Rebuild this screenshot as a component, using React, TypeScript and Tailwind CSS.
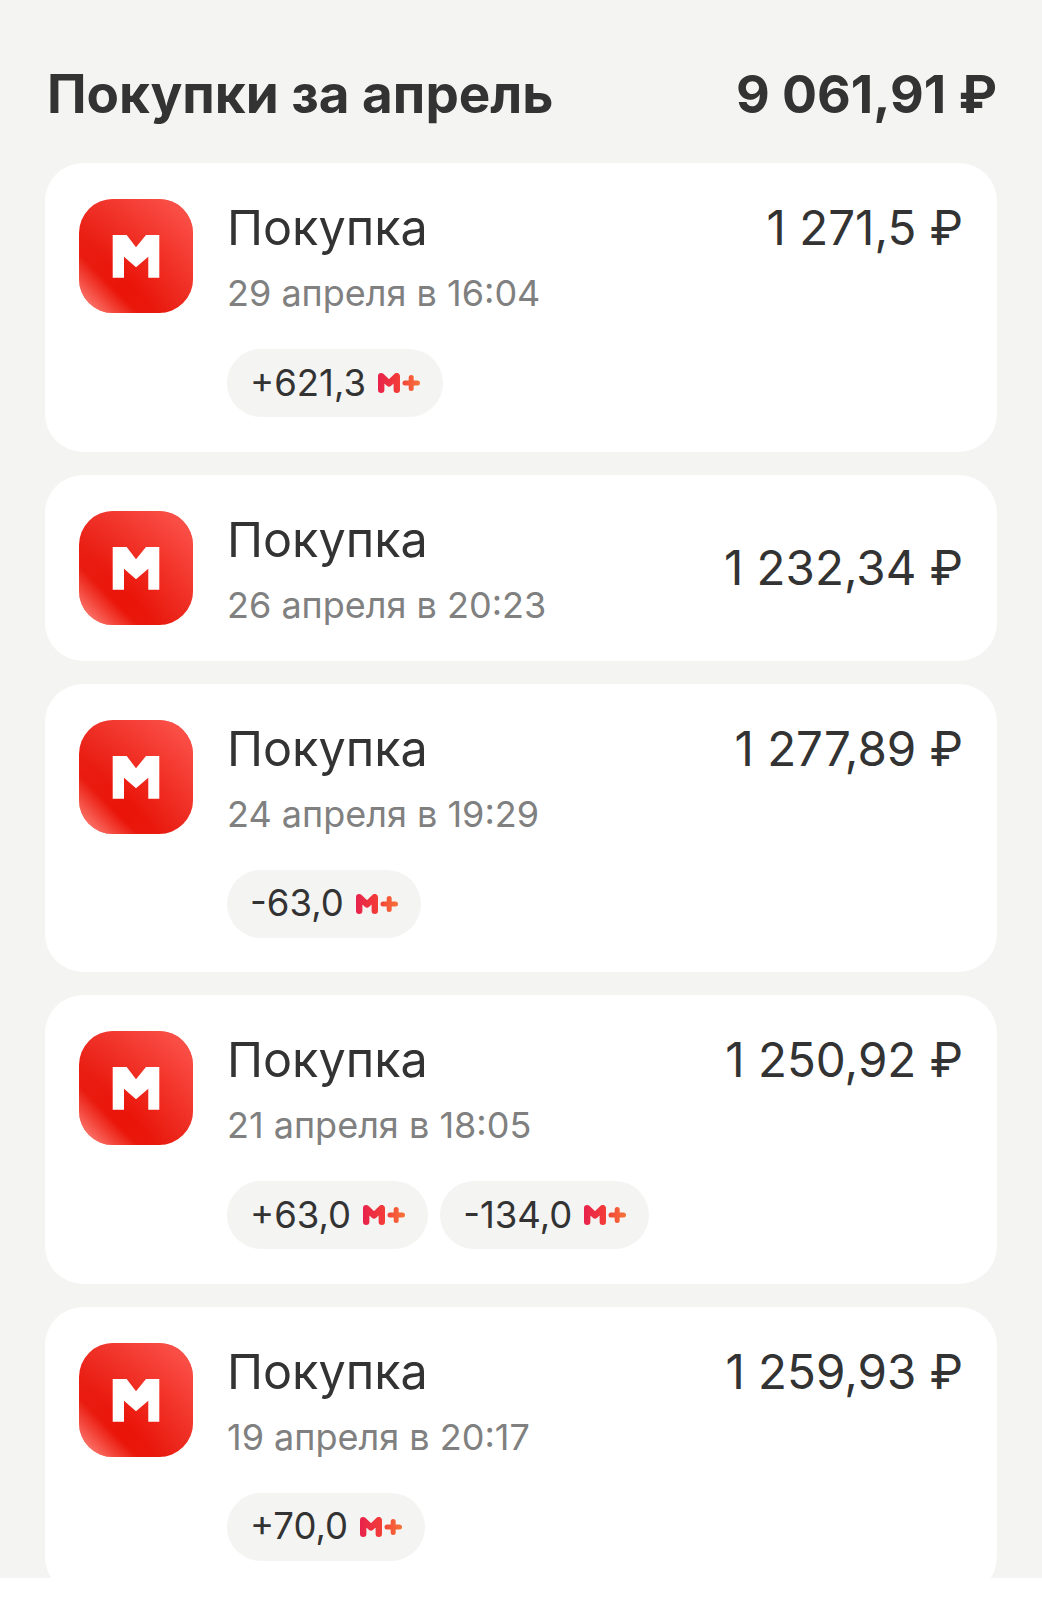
import { useId } from 'react'

type Purchase = {
  date: string
  amount: string
  bonuses: string[]
}

const PURCHASES: Purchase[] = [
  { date: '29 апреля в 16:04', amount: '1 271,5 ₽', bonuses: ['+621,3'] },
  { date: '26 апреля в 20:23', amount: '1 232,34 ₽', bonuses: [] },
  { date: '24 апреля в 19:29', amount: '1 277,89 ₽', bonuses: ['-63,0'] },
  { date: '21 апреля в 18:05', amount: '1 250,92 ₽', bonuses: ['+63,0', '-134,0'] },
  { date: '19 апреля в 20:17', amount: '1 259,93 ₽', bonuses: ['+70,0'] },
]

function ShopLogo() {
  const id = useId()
  return (
    <svg width="114" height="114" viewBox="0 0 114 114" className="shrink-0">
      <defs>
        <linearGradient id={id} x1="0" y1="0" x2="1" y2="1">
          <stop offset="0" stopColor="#e92218" />
          <stop offset="0.6" stopColor="#ea1408" />
          <stop offset="1" stopColor="#e81c10" />
        </linearGradient>
        <linearGradient id={`${id}-tr`} x1="0.95" y1="0.05" x2="0.35" y2="0.65">
          <stop offset="0" stopColor="#ff5f58" stopOpacity="0.85" />
          <stop offset="1" stopColor="#ff5f58" stopOpacity="0" />
        </linearGradient>
        <linearGradient id={`${id}-bl`} x1="0.08" y1="0.92" x2="0.26" y2="0.74">
          <stop offset="0" stopColor="#ff8076" stopOpacity="0.85" />
          <stop offset="1" stopColor="#ff8076" stopOpacity="0" />
        </linearGradient>
      </defs>
      <rect width="114" height="114" rx="34" fill={`url(#${id})`} />
      <rect width="114" height="114" rx="34" fill={`url(#${id}-tr)`} />
      <rect width="114" height="114" rx="34" fill={`url(#${id}-bl)`} />
      <path
        d="M33.7 36H47.7L57 48.3L67 36H80.3V78.7H69.3V57.7L57 68.3L45 57.7V78.7H33.7Z"
        fill="#fff"
      />
    </svg>
  )
}

function PlusLogo() {
  const id = useId()
  return (
    <svg width="42" height="20" viewBox="0 0 42 20" className="shrink-0">
      <defs>
        <linearGradient id={id} x1="0" y1="0" x2="42" y2="0" gradientUnits="userSpaceOnUse">
          <stop offset="0" stopColor="#e8234c" />
          <stop offset="0.5" stopColor="#f23c38" />
          <stop offset="1" stopColor="#f8743a" />
        </linearGradient>
      </defs>
      <path
        d="M3.2 16.8V3.2L11 10.5L18.8 3.2V16.8"
        fill="none"
        stroke={`url(#${id})`}
        strokeWidth="6.4"
        strokeLinecap="round"
        strokeLinejoin="round"
      />
      <path
        d="M27 10H39.5M33.2 4.5V15.5"
        fill="none"
        stroke={`url(#${id})`}
        strokeWidth="5"
        strokeLinecap="round"
      />
    </svg>
  )
}

function BonusChip({ value }: { value: string }) {
  return (
    <div className="flex h-[68px] items-center gap-3 rounded-full bg-[#f4f4f3] px-[23px] text-[36.5px] text-[#333333]">
      <span>{value}</span>
      <PlusLogo />
    </div>
  )
}

function PurchaseCard({ date, amount, bonuses }: Purchase) {
  const hasBonuses = bonuses.length > 0

  return (
    <div className={`flex shrink-0 gap-[34px] rounded-[38px] bg-white pt-9 pr-[34px] pl-[34px] ${hasBonuses ? 'pb-[34.5px]' : 'pb-9'}`}>
      <ShopLogo />
      <div className="min-w-0 flex-1">
        <div className={`flex justify-between ${hasBonuses ? 'items-start' : 'items-center'}`}>
          <div>
            <div className="h-[56px] pt-px text-[48.5px] leading-[56px] text-[#333333]">Покупка</div>
            <div className="mt-[18px] h-[40px] text-[36px] leading-[40px] text-[#808080]">{date}</div>
          </div>
          <div className={`text-[47.5px] leading-[56px] text-[#333333] ${hasBonuses ? 'pt-px' : ''}`}>{amount}</div>
        </div>
        {hasBonuses && (
          <div className="mt-9 flex gap-3">
            {bonuses.map((b) => (
              <BonusChip key={b} value={b} />
            ))}
          </div>
        )}
      </div>
    </div>
  )
}

export default function App() {
  return (
    <div className="min-h-[1600px] bg-white font-['Inter','Liberation_Sans',sans-serif]">
      <div className="flex h-[1578px] flex-col overflow-hidden bg-[#f4f4f3] px-[45px]">
        <header className="flex h-[163px] shrink-0 items-start justify-between pt-[62px] pl-[2px] leading-[64px] font-bold text-[#333333]">
          <h1 className="text-[53px]">Покупки за апрель</h1>
          <div className="pt-px text-[52px]">9 061,91 ₽</div>
        </header>
        <div className="flex flex-col gap-[23px]">
          {PURCHASES.map((p) => (
            <PurchaseCard key={p.date} {...p} />
          ))}
        </div>
      </div>
    </div>
  )
}
